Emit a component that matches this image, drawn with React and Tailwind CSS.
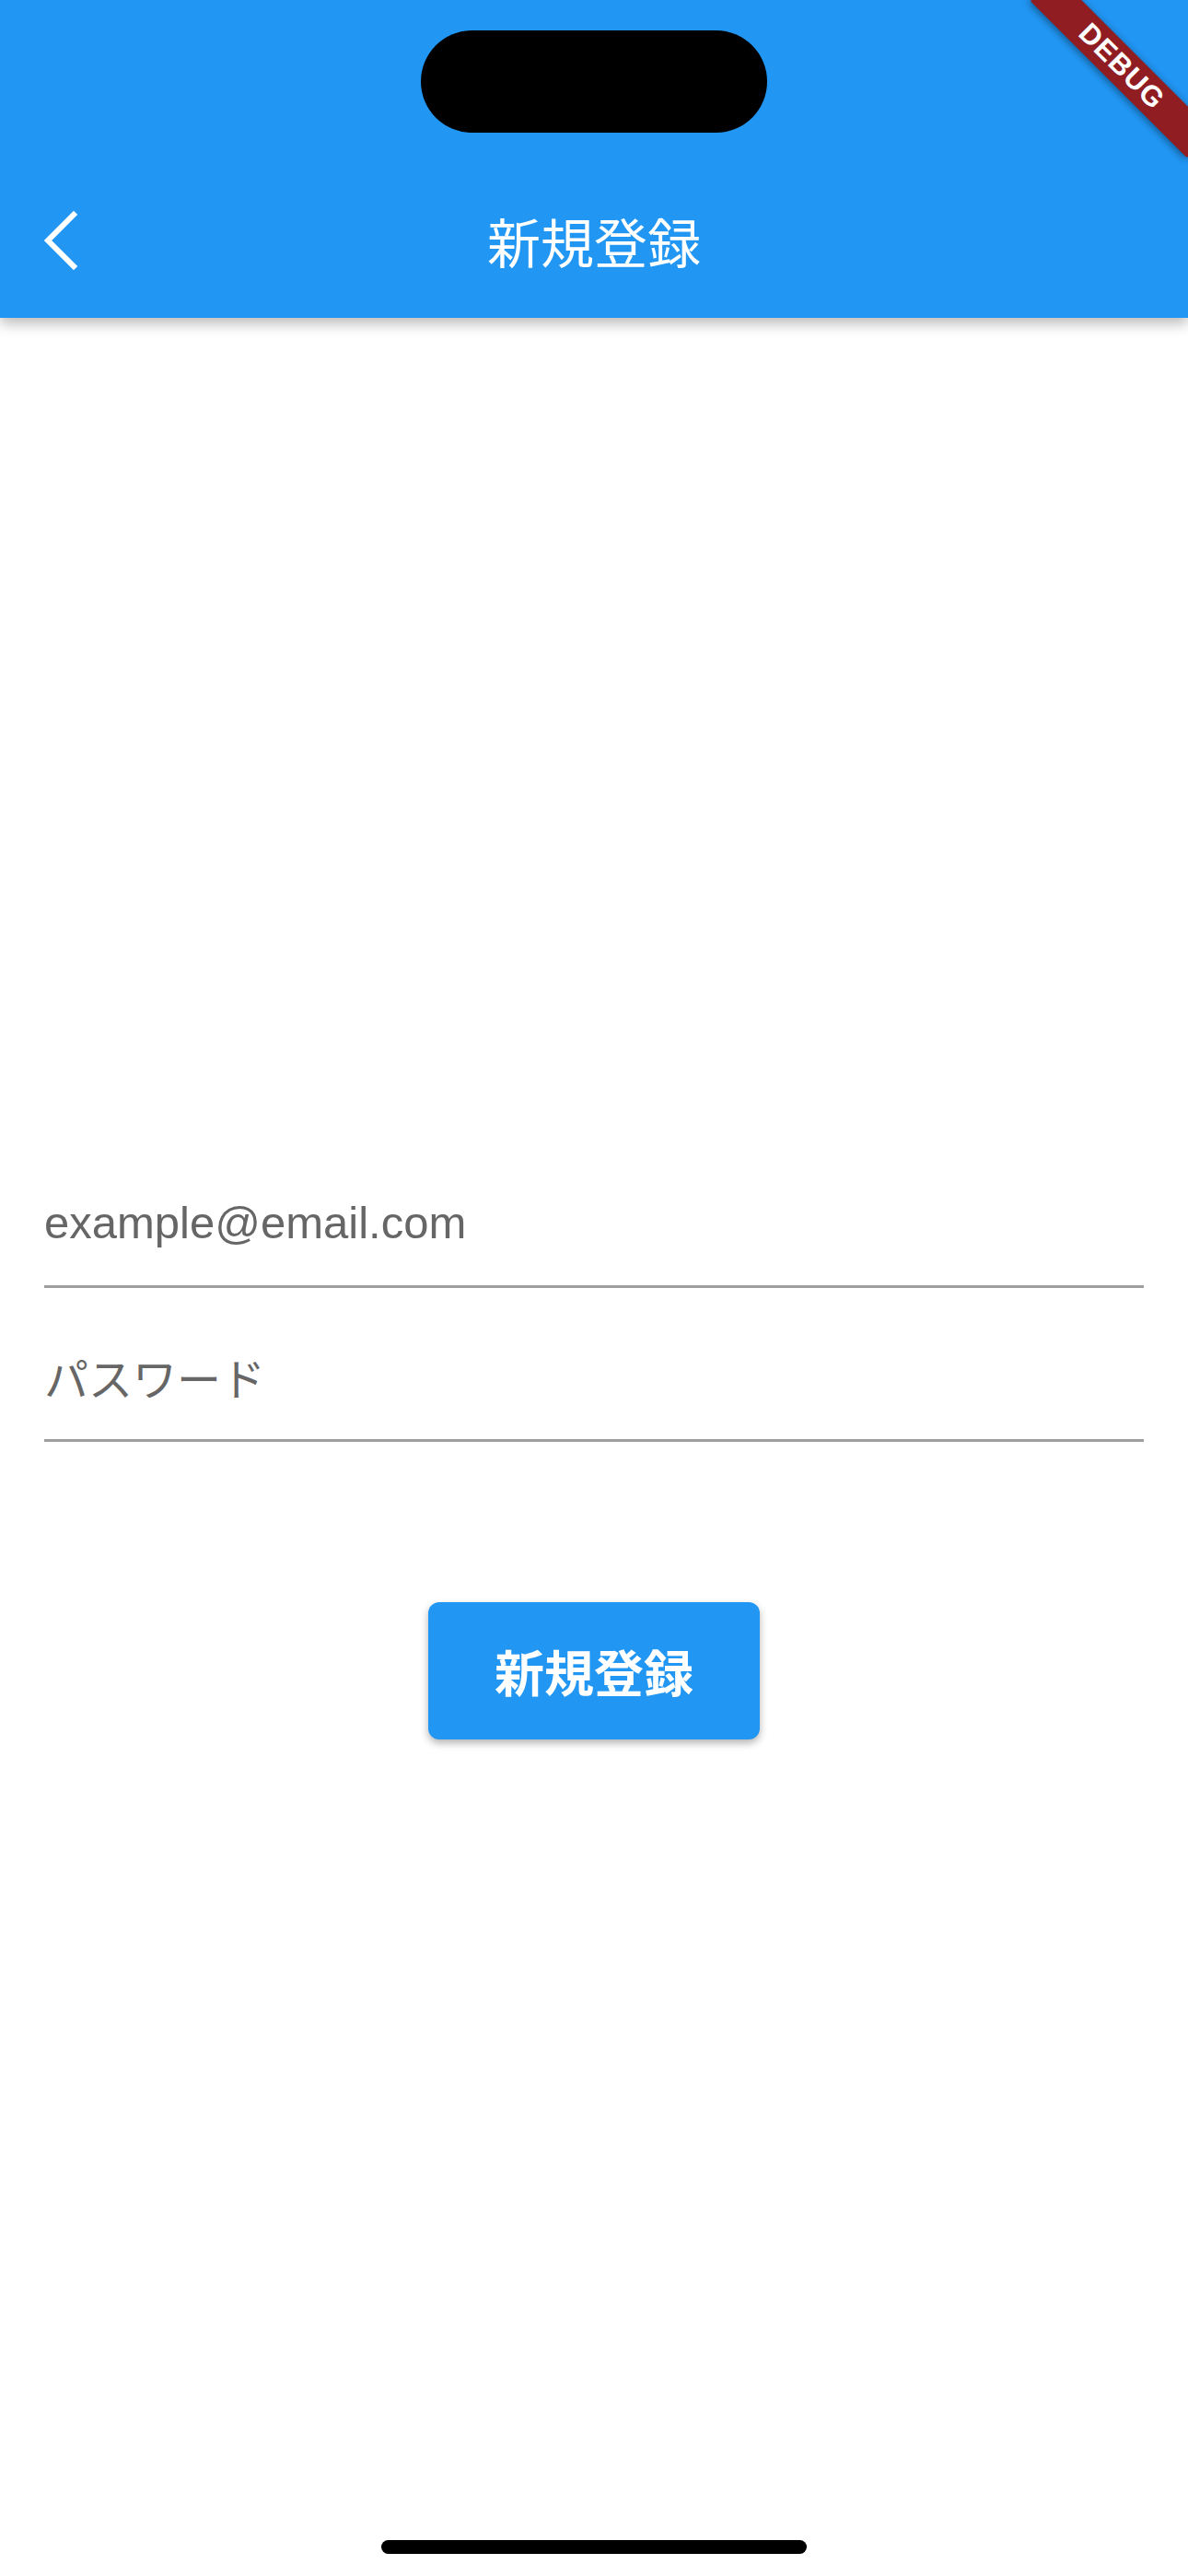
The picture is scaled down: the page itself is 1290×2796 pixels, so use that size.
import React from 'react';

const JP = { fontFamily: '"Noto Sans CJK JP", sans-serif' };
const LATIN = { fontFamily: '"Liberation Sans", "Noto Sans CJK JP", sans-serif' };

function BackChevron() {
  return (
    <svg width="40" height="64" viewBox="0 0 40 64" fill="none">
      <polyline points="34,4 6,32 34,60" stroke="#fff" strokeWidth="6" strokeLinecap="square" />
    </svg>
  );
}

function DebugBanner() {
  return (
    <div className="pointer-events-none absolute top-0 right-0 w-[200px] h-[200px] overflow-hidden z-20">
      <div className="absolute left-[8px] top-[52px] w-[240px] h-[40px] rotate-45 bg-[#8f1d22] flex items-center justify-center shadow-[0_2px_8px_rgba(0,0,0,0.45)]">
        <span className="text-white font-bold text-[31px] tracking-[1px]" style={{ fontFamily: '"Liberation Sans", sans-serif' }}>
          DEBUG
        </span>
      </div>
    </div>
  );
}

function Field({ placeholder, latin }) {
  return (
    <div className="h-[167px] border-b-[3px] border-[#9e9e9e] pt-[28px] flex items-center">
      <span className={`${latin ? 'text-[49px]' : 'text-[48px]'} leading-none text-[#666666]`} style={latin ? LATIN : JP}>
        {placeholder}
      </span>
    </div>
  );
}

export default function App() {
  return (
    <div className="relative w-[1290px] h-[2796px] bg-white overflow-hidden">
      <header className="relative z-10 h-[345px] bg-[#2196f3] shadow-[0_6px_14px_rgba(0,0,0,0.28)] flex flex-col">
        <div className="h-[177px] pt-[33px] flex justify-center">
          <div className="w-[376px] h-[111px] rounded-full bg-black" />
        </div>
        <div className="h-[168px] grid grid-cols-[1fr_auto_1fr] items-center">
          <div className="pl-[46px] flex items-center">
            <BackChevron />
          </div>
          <h1 className="text-white text-[58px] font-normal leading-none" style={JP}>
            新規登録
          </h1>
          <div />
        </div>
        <DebugBanner />
      </header>

      <main className="px-[48px] pt-[886px]">
        <Field placeholder="example@email.com" latin />
        <Field placeholder="パスワード" />
        <div className="mt-[174px] flex justify-center">
          <button className="w-[360px] h-[149px] rounded-[12px] bg-[#2196f3] text-white text-[54px] font-bold shadow-[0_4px_8px_rgba(0,0,0,0.3)]" style={JP}>
            新規登録
          </button>
        </div>
      </main>

      <div className="absolute left-[414px] top-[2757px] w-[462px] h-[15px] rounded-full bg-black" />
    </div>
  );
}
